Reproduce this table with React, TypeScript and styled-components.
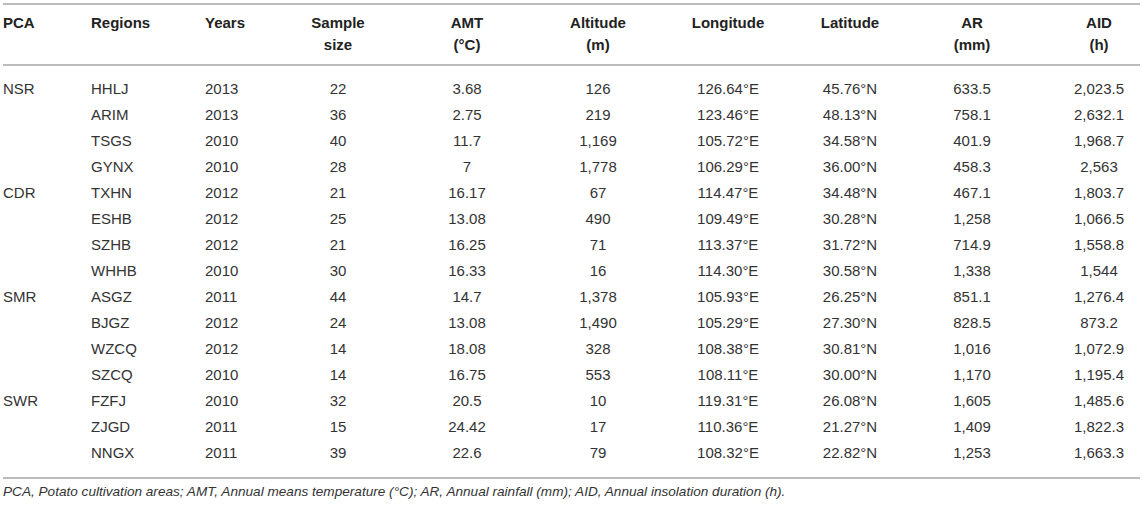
import React from "react";
import styled, { createGlobalStyle } from "styled-components";

const Global = createGlobalStyle`
  html, body { margin: 0; padding: 0; background: #ffffff; }
  body { font-family: "Liberation Sans", Arial, sans-serif; color: #333333; }
`;

const Page = styled.div`
  padding: 3px 3px 0 3px;
  width: 1137px;
`;

const Table = styled.table`
  width: 1137px;
  table-layout: fixed;
  border-collapse: collapse;
  border-top: 2px solid #bcbcbc;
  border-bottom: 2px solid #bcbcbc;
  font-size: 15px;
`;

type Align = "left" | "center";

const Th = styled.th<{ $align: Align; $pl?: number }>`
  text-align: ${(p) => p.$align};
  vertical-align: top;
  font-weight: bold;
  color: #222222;
  line-height: 22px;
  padding: 7px 0 8px ${(p) => p.$pl ?? 0}px;
  border-bottom: 2px solid #bcbcbc;
`;

const Td = styled.td<{ $align: Align; $pl?: number }>`
  text-align: ${(p) => p.$align};
  height: 26px;
  line-height: 26px;
  padding: 0 0 0 ${(p) => p.$pl ?? 0}px;
  white-space: nowrap;
  color: #333333;
`;

const Row = styled.tr<{ $first?: boolean; $last?: boolean }>`
  & > td {
    padding-top: ${(p) => (p.$first ? 10 : 0)}px;
    padding-bottom: ${(p) => (p.$last ? 11 : 0)}px;
  }
`;

const Footnote = styled.p`
  margin: 5px 0 0 0;
  font-size: 13.6px;
  font-style: italic;
  color: #333333;
  line-height: 16px;
`;

const cols: { w: number; align: Align; pl?: number; head: React.ReactNode }[] = [
  { w: 88, align: "left", head: "PCA" },
  { w: 114, align: "left", head: "Regions" },
  { w: 75, align: "left", head: "Years" },
  { w: 116, align: "center", head: <>Sample<br />size</> },
  { w: 142, align: "center", head: <>AMT<br />(°C)</> },
  { w: 120, align: "center", head: <>Altitude<br />(m)</> },
  { w: 140, align: "center", head: "Longitude" },
  { w: 104, align: "center", head: "Latitude" },
  { w: 140, align: "center", head: <>AR<br />(mm)</> },
  { w: 98, align: "center", pl: 16, head: <>AID<br />(h)</> },
];

const data: string[][] = [
  ["NSR", "HHLJ", "2013", "22", "3.68", "126", "126.64°E", "45.76°N", "633.5", "2,023.5"],
  ["", "ARIM", "2013", "36", "2.75", "219", "123.46°E", "48.13°N", "758.1", "2,632.1"],
  ["", "TSGS", "2010", "40", "11.7", "1,169", "105.72°E", "34.58°N", "401.9", "1,968.7"],
  ["", "GYNX", "2010", "28", "7", "1,778", "106.29°E", "36.00°N", "458.3", "2,563"],
  ["CDR", "TXHN", "2012", "21", "16.17", "67", "114.47°E", "34.48°N", "467.1", "1,803.7"],
  ["", "ESHB", "2012", "25", "13.08", "490", "109.49°E", "30.28°N", "1,258", "1,066.5"],
  ["", "SZHB", "2012", "21", "16.25", "71", "113.37°E", "31.72°N", "714.9", "1,558.8"],
  ["", "WHHB", "2010", "30", "16.33", "16", "114.30°E", "30.58°N", "1,338", "1,544"],
  ["SMR", "ASGZ", "2011", "44", "14.7", "1,378", "105.93°E", "26.25°N", "851.1", "1,276.4"],
  ["", "BJGZ", "2012", "24", "13.08", "1,490", "105.29°E", "27.30°N", "828.5", "873.2"],
  ["", "WZCQ", "2012", "14", "18.08", "328", "108.38°E", "30.81°N", "1,016", "1,072.9"],
  ["", "SZCQ", "2010", "14", "16.75", "553", "108.11°E", "30.00°N", "1,170", "1,195.4"],
  ["SWR", "FZFJ", "2010", "32", "20.5", "10", "119.31°E", "26.08°N", "1,605", "1,485.6"],
  ["", "ZJGD", "2011", "15", "24.42", "17", "110.36°E", "21.27°N", "1,409", "1,822.3"],
  ["", "NNGX", "2011", "39", "22.6", "79", "108.32°E", "22.82°N", "1,253", "1,663.3"],
];

export default function App() {
  return (
    <>
      <Global />
      <Page>
        <Table>
          <colgroup>
            {cols.map((c, i) => (
              <col key={i} style={{ width: c.w }} />
            ))}
          </colgroup>
          <thead>
            <tr>
              {cols.map((c, i) => (
                <Th key={i} $align={c.align} $pl={c.pl}>
                  {c.head}
                </Th>
              ))}
            </tr>
          </thead>
          <tbody>
            {data.map((r, ri) => (
              <Row key={ri} $first={ri === 0} $last={ri === data.length - 1}>
                {r.map((v, ci) => (
                  <Td key={ci} $align={cols[ci].align} $pl={cols[ci].pl}>
                    {v}
                  </Td>
                ))}
              </Row>
            ))}
          </tbody>
        </Table>
        <Footnote>
          PCA, Potato cultivation areas; AMT, Annual means temperature (°C); AR, Annual rainfall (mm); AID, Annual
          insolation duration (h).
        </Footnote>
      </Page>
    </>
  );
}
